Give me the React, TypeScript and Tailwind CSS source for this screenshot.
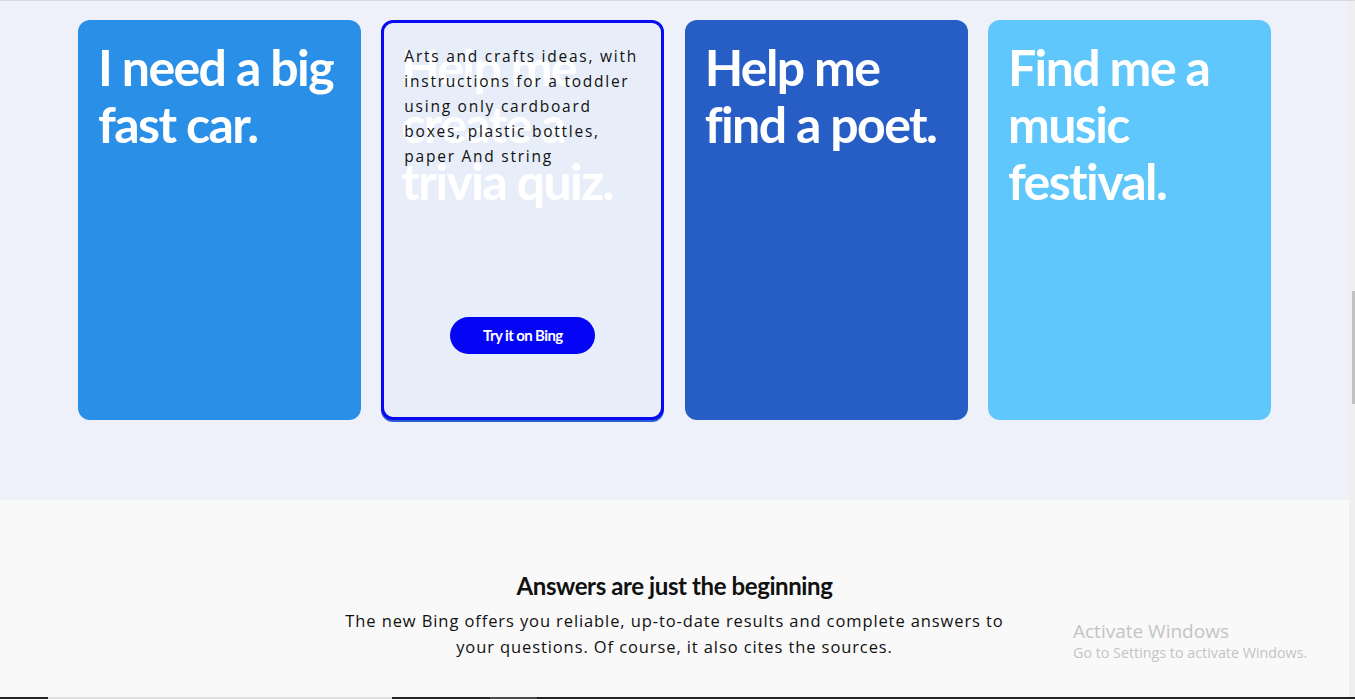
import React from 'react';

const lato = { fontFamily: 'Lato, "Liberation Sans", sans-serif' };

interface Card {
  title: string;
  bg: string;
}

const cards: Card[] = [
  { title: 'I need a big fast car.', bg: 'bg-[#2a8fe7]' },
  { title: 'Help me create a trivia quiz.', bg: 'active' },
  { title: 'Help me find a poet.', bg: 'bg-[#275ec6]' },
  { title: 'Find me a music festival.', bg: 'bg-[#5fc7fc]' },
];

function PromptCard({ card }: { card: Card }) {
  if (card.bg === 'active') {
    return (
      <div className="relative w-[283px] h-[400px] shrink-0 rounded-[12px] border-[3px] border-[#0a0af0] bg-[#e8eef9] shadow-[0_2px_0_#2a5fd0] px-[17px] pt-[16px]">
        <h3 className="font-['Lato'] font-bold text-[50px] leading-[57px] text-white tracking-[-1.6px]">
          Help me create a trivia quiz.
        </h3>
        <p className="absolute left-[20px] w-[242px] top-[21px] font-['Open_Sans'] text-[15.5px] leading-[25px] tracking-[1.75px] text-[#111]">
          Arts and crafts ideas, with instructions for a toddler using only cardboard boxes, plastic bottles, paper And string
        </p>
        <div className="absolute left-0 right-0 top-[294px] flex justify-center">
          <button className="w-[145px] h-[37px] rounded-full bg-[#0505f5] text-white font-['Lato'] font-bold text-[15px] tracking-[-0.6px]">
            Try it on Bing
          </button>
        </div>
      </div>
    );
  }
  return (
    <div className={`w-[283px] h-[400px] shrink-0 rounded-[12px] ${card.bg} px-[20px] pt-[19px]`}>
      <h3 className="font-['Lato'] font-bold text-[50px] leading-[57px] text-white tracking-[-1.6px]">
        {card.title}
      </h3>
    </div>
  );
}

export default function App() {
  return (
    <div className="relative h-[699px] w-full overflow-hidden flex flex-col bg-[#f9f9f9]" style={lato}>
      <div className="h-px bg-[#d9d9d9]" />
      <div className="flex flex-1 min-h-0">
        <main className="flex-1 flex flex-col">
          <section className="h-[499px] bg-[#eef1f9] pt-[19px]">
            <div className="flex justify-center gap-[20.3px]">
              {cards.map((c) => (
                <PromptCard key={c.title} card={c} />
              ))}
            </div>
          </section>
          <section className="flex-1 bg-[#f9f9f9] flex flex-col items-center pt-[70px]">
            <h2 className="font-['Lato'] font-bold text-[24px] leading-[32px] text-[#111] tracking-[-0.4px]">
              Answers are just the beginning
            </h2>
            <p className="mt-[6px] w-[664px] text-center font-['Open_Sans'] text-[16.5px] leading-[26px] text-[#111] tracking-[0.9px]">
              The new Bing offers you reliable, up-to-date results and complete answers to your questions. Of course, it also cites the sources.
            </p>
          </section>
        </main>
        <div className="w-[6px] bg-[#efefef] flex justify-end pt-[290px]">
          <div className="w-[3px] h-[113px] bg-[#c1c1c1]" />
        </div>
      </div>
      <div className="h-[2px] flex">
        <div className="w-[48px] bg-[#222]" />
        <div className="w-[344px] bg-[#e0e0e0]" />
        <div className="w-[98px] bg-[#222]" />
        <div className="w-[47px] bg-[#4a4a4a]" />
        <div className="flex-1 bg-[#222]" />
      </div>
      <div className="absolute left-[1073px] top-[618px] font-['Open_Sans'] text-[#c4c4c4] pointer-events-none">
        <div className="text-[19px] leading-[26px]">Activate Windows</div>
        <div className="text-[14.3px] leading-[20px] -mt-[1px]">Go to Settings to activate Windows.</div>
      </div>
    </div>
  );
}
